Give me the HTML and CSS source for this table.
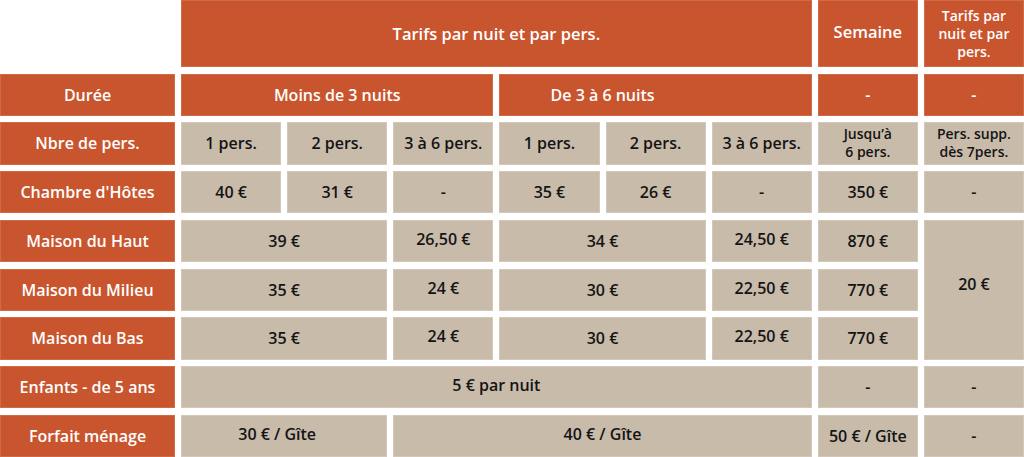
FILE: index.html
```html
<!DOCTYPE html>
<html lang="fr">
<head>
<meta charset="utf-8">
<title>Tarifs</title>
<link rel="stylesheet" href="styles.css">
</head>
<body>
<div class="tarifs">
  <div class="blank"></div>
  <div class="cell head span6 big">Tarifs par nuit et par pers.</div>
  <div class="cell head big up">Semaine</div>
  <div class="cell head small">Tarifs par<br>nuit et par<br>pers.</div>

  <div class="cell head">Durée</div>
  <div class="cell head span3">Moins de 3 nuits</div>
  <div class="cell head span3 shift">De 3 à 6 nuits</div>
  <div class="cell head">-</div>
  <div class="cell head">-</div>

  <div class="cell head">Nbre de pers.</div>
  <div class="cell data">1 pers.</div>
  <div class="cell data">2 pers.</div>
  <div class="cell data">3 à 6 pers.</div>
  <div class="cell data">1 pers.</div>
  <div class="cell data">2 pers.</div>
  <div class="cell data">3 à 6 pers.</div>
  <div class="cell data small">Jusqu’à<br>6 pers.</div>
  <div class="cell data small">Pers. supp.<br>dès 7pers.</div>

  <div class="cell head">Chambre d'Hôtes</div>
  <div class="cell data">40 €</div>
  <div class="cell data">31 €</div>
  <div class="cell data">-</div>
  <div class="cell data">35 €</div>
  <div class="cell data">26 €</div>
  <div class="cell data">-</div>
  <div class="cell data">350 €</div>
  <div class="cell data">-</div>

  <div class="cell head">Maison du Haut</div>
  <div class="cell data span2">39 €</div>
  <div class="cell data up">26,50 €</div>
  <div class="cell data span2">34 €</div>
  <div class="cell data up">24,50 €</div>
  <div class="cell data">870 €</div>
  <div class="cell data rows3">20 €</div>

  <div class="cell head">Maison du Milieu</div>
  <div class="cell data span2">35 €</div>
  <div class="cell data up">24 €</div>
  <div class="cell data span2">30 €</div>
  <div class="cell data up">22,50 €</div>
  <div class="cell data">770 €</div>

  <div class="cell head">Maison du Bas</div>
  <div class="cell data span2">35 €</div>
  <div class="cell data up">24 €</div>
  <div class="cell data span2">30 €</div>
  <div class="cell data up">22,50 €</div>
  <div class="cell data">770 €</div>

  <div class="cell head">Enfants - de 5 ans</div>
  <div class="cell data span6 up">5 € par nuit</div>
  <div class="cell data">-</div>
  <div class="cell data">-</div>

  <div class="cell head">Forfait ménage</div>
  <div class="cell data span2 left up">30 € / Gîte</div>
  <div class="cell data span4 up">40 € / Gîte</div>
  <div class="cell data">50 € / Gîte</div>
  <div class="cell data">-</div>
</div>
</body>
</html>
```
FILE: styles.css
```css
html, body {
  margin: 0;
  padding: 0;
  background: #ffffff;
}

.tarifs {
  width: 1024px;
  height: 457px;
  display: grid;
  grid-template-columns: 175px repeat(8, 1fr);
  grid-template-rows: 67px repeat(8, 1fr);
  column-gap: 6px;
  row-gap: 6.7px;
  font-family: "Open Sans", "Liberation Sans", sans-serif;
  font-weight: 600;
  font-size: 16px;
}

.cell {
  display: flex;
  align-items: center;
  justify-content: center;
  text-align: center;
  box-sizing: border-box;
  line-height: 18px;
}

.head {
  background: #c8552e;
  color: #ffffff;
  border: 1px solid #d06b48;
}

.data {
  background: #c9bbaa;
  color: #141414;
  border: 1px solid #d3c7b9;
}

.big { font-size: 16.5px; }
.small { font-size: 14px; line-height: 18px; }

.span2 { grid-column: span 2; }
.span3 { grid-column: span 3; }
.span4 { grid-column: span 4; }
.span6 { grid-column: span 6; }
.rows3 { grid-row: span 3; padding-bottom: 12px; }

.shift { padding-right: 106px; }
.left { padding-right: 14px; }
.up { padding-bottom: 4px; }
```
